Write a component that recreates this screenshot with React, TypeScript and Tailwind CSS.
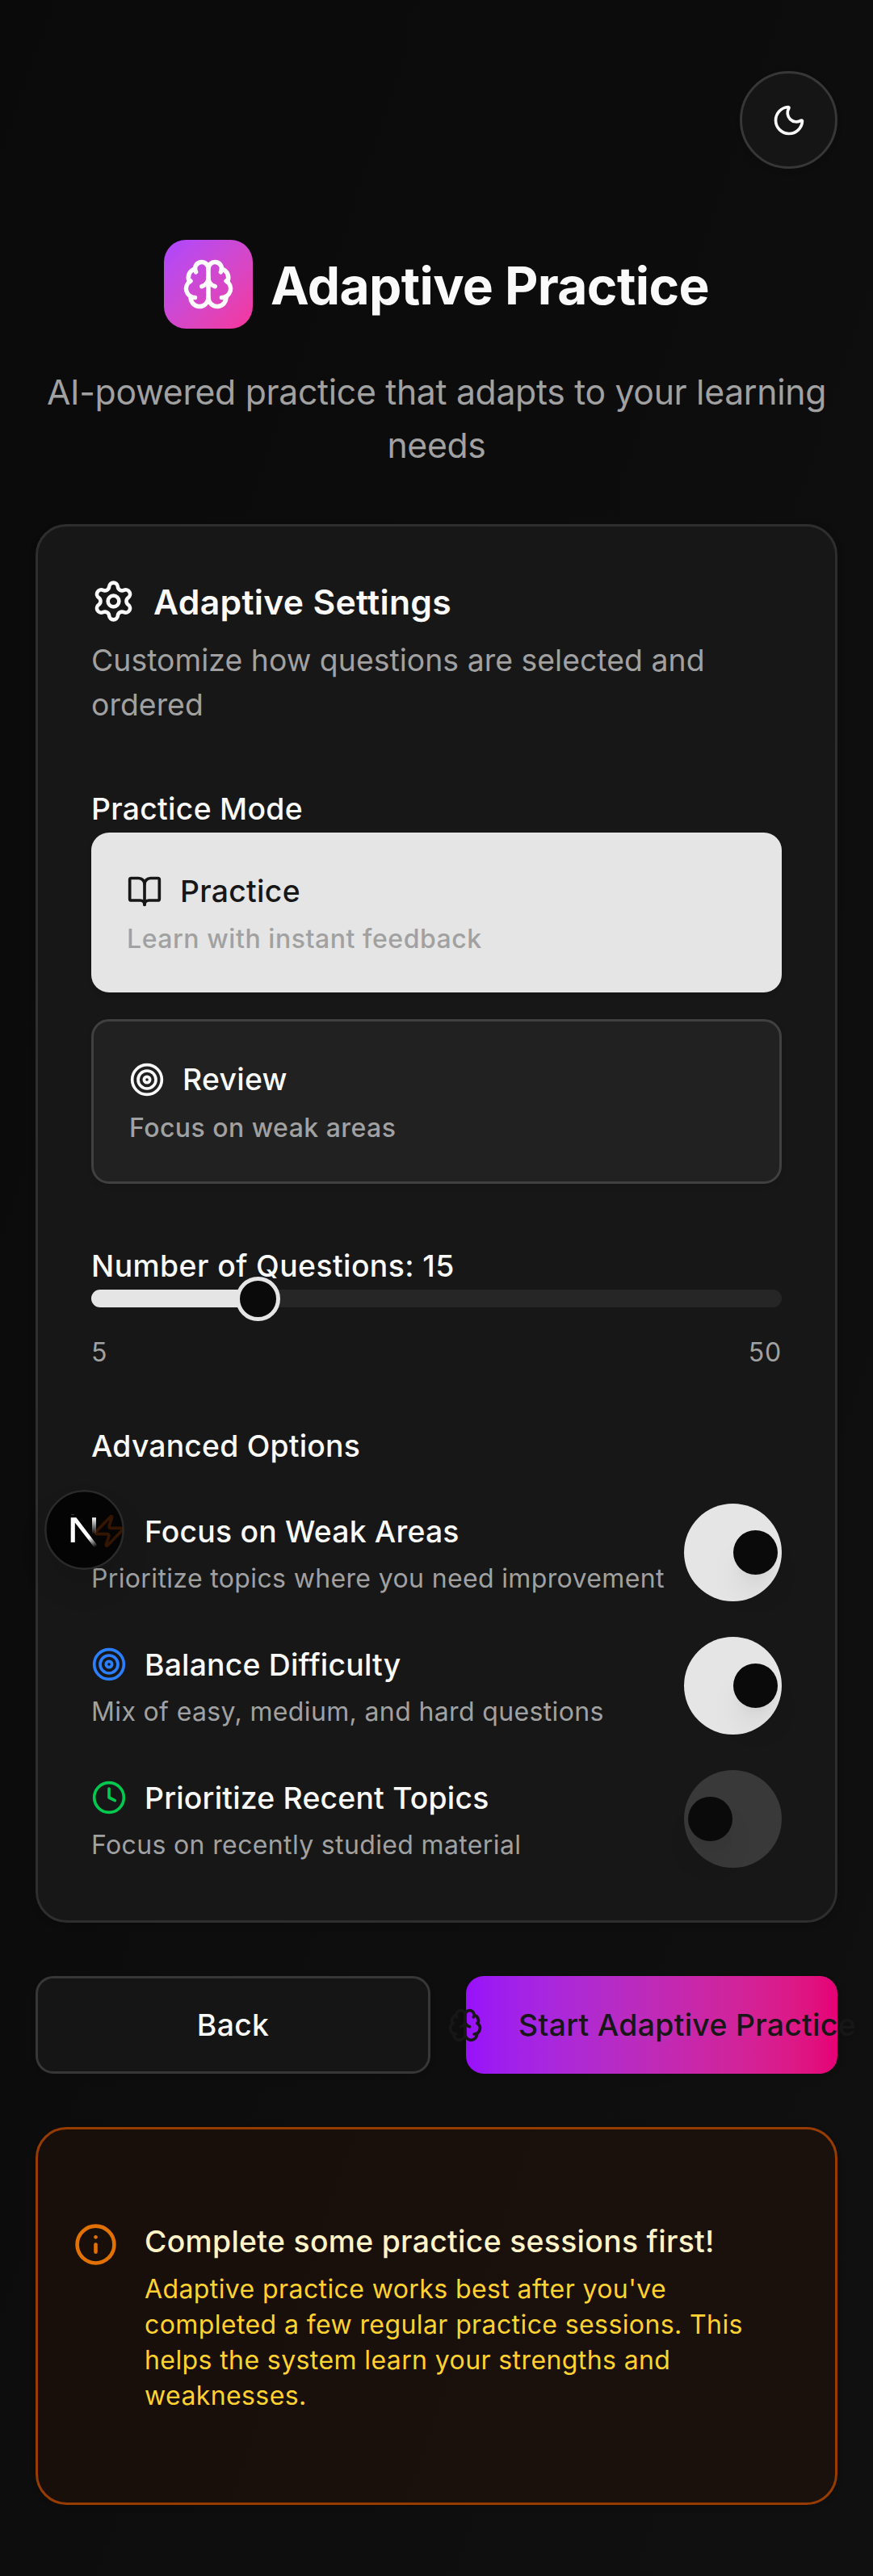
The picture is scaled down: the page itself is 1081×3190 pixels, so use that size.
import React from "react";
import { BookOpen, Brain, Clock, Info, Moon, Settings, Target, Zap } from "lucide-react";

function Switch({ on }: { on: boolean }) {
  return (
    <div
      className={
        on
          ? "flex h-[121px] w-[121px] shrink-0 items-center justify-end rounded-full bg-[#e5e5e5] pr-[5px]"
          : "flex h-[121px] w-[121px] shrink-0 items-center justify-start rounded-full bg-[#393939] pl-[5px]"
      }
    >
      <div className="h-[55px] w-[55px] rounded-full bg-[#0a0a0a] shadow-[0_27px_41px_-8px_rgba(0,0,0,0.1),0_11px_16px_-11px_rgba(0,0,0,0.1)]" />
    </div>
  );
}

function OptionRow({
  icon,
  title,
  text,
  on,
}: {
  icon: React.ReactNode;
  title: string;
  text: string;
  on: boolean;
}) {
  return (
    <div className="flex h-[121px] items-center justify-between">
      <div className="whitespace-nowrap">
        <div className="flex h-[55px] items-center gap-[22px]">
          {icon}
          <span className="text-[37.35px] font-medium leading-[55px] tracking-[0.2px] text-neutral-50">{title}</span>
        </div>
        <p className="mt-[9px] text-[32px] leading-[44px] tracking-[0.36px] text-[#a1a1a1]">{text}</p>
      </div>
      <Switch on={on} />
    </div>
  );
}

function DevBadge() {
  return (
    <div className="absolute left-[55px] top-[1845px] h-[99px] w-[99px] rounded-full bg-black/80 shadow-[0_22px_44px_-6px_rgba(0,0,0,0.12)]">
      <svg viewBox="0 0 99 99" className="h-full w-full" fill="none">
        <defs>
          <linearGradient id="diag" x1="48" y1="50" x2="63" y2="71" gradientUnits="userSpaceOnUse">
            <stop stopColor="#fff" />
            <stop offset="0.45" stopColor="#fff" />
            <stop offset="1" stopColor="#fff" stopOpacity="0" />
          </linearGradient>
          <linearGradient id="stem" x1="61" y1="34" x2="61" y2="55" gradientUnits="userSpaceOnUse">
            <stop stopColor="#fff" />
            <stop offset="1" stopColor="#fff" stopOpacity="0" />
          </linearGradient>
        </defs>
        <circle cx="49.5" cy="49.5" r="48.2" stroke="#2a2a2a" strokeWidth="2.6" />
        <path d="M32.7 34.3H39.4L66 69.3L62.3 72L37.8 40.5V65H32.7Z" fill="url(#diag)" />
        <path d="M59 34.3H64V55H59Z" fill="url(#stem)" />
        <path d="M33 30.7H37" stroke="#3a3a3a" strokeWidth="1" />
      </svg>
    </div>
  );
}

export default function App() {
  return (
    <div className="relative h-[3190px] w-[1081px] overflow-hidden bg-linear-to-br from-[#0a0a0a] to-[#101010] px-[44px] pt-[88px] font-['Inter',sans-serif] text-neutral-50">
      <div className="flex justify-end">
        <button className="flex h-[121px] w-[121px] items-center justify-center rounded-full border-[3px] border-[#373737] bg-[#151515] shadow-[0_3px_6px_rgba(0,0,0,0.1)]">
          <Moon className="h-[44px] w-[44px]" />
        </button>
      </div>

      <header className="mt-[88px]">
        <div className="flex h-[110px] items-center justify-center gap-[22px]">
          <div className="flex h-[110px] w-[110px] items-center justify-center rounded-[27.5px] bg-linear-to-br from-[#ad46ff] to-[#f6339a]">
            <Brain className="h-[66px] w-[66px] text-white" />
          </div>
          <h1 className="pt-[3px] text-[64px] font-bold leading-[88px] tracking-[-0.62px]">Adaptive Practice</h1>
        </div>
        <p className="mt-[46px] text-center text-[42.7px] leading-[66px] tracking-[-0.29px] text-[#a1a1a1]">
          AI-powered practice that adapts to your learning
          <br />
          needs
        </p>
      </header>

      <section className="mt-[64px] h-[1732px] rounded-[38.5px] border-[3px] border-[#2e2e2e] bg-[#171717] px-[66px] pt-[65px] shadow-[0_3px_8px_rgba(0,0,0,0.2)]">
        <div className="flex h-[55px] items-center gap-[22px]">
          <Settings className="h-[55px] w-[55px]" />
          <h2 className="pt-[2px] text-[42.7px] font-semibold leading-[55px] tracking-[0.3px]">Adaptive Settings</h2>
        </div>
        <p className="mt-[18px] text-[37.35px] leading-[55px] tracking-[0.05px] text-[#a1a1a1]">
          Customize how questions are selected and
          <br />
          ordered
        </p>

        <h3 className="mt-[74px] text-[37.35px] font-medium leading-[55px] tracking-[0.29px]">Practice Mode</h3>
        <button className="mt-[2px] flex h-[198px] w-full flex-col rounded-[22px] bg-[#e5e5e5] px-[44px] pt-[45px] text-left text-[#171717] shadow-[0_3px_6px_rgba(0,0,0,0.1)]">
          <span className="flex h-[55px] items-center gap-[22px]">
            <BookOpen className="h-[44px] w-[44px]" />
            <span className="text-[37.35px] font-medium tracking-[0.29px]">Practice</span>
          </span>
          <span className="mt-[10px] text-[32px] font-medium leading-[44px] tracking-[0.55px] text-[#a1a1a1]">
            Learn with instant feedback
          </span>
        </button>
        <button className="mt-[33px] flex h-[204px] w-full flex-col rounded-[22px] border-[3px] border-[#404040] bg-[#212121] px-[44px] pt-[44px] text-left shadow-[0_3px_6px_rgba(0,0,0,0.1)]">
          <span className="flex h-[55px] items-center gap-[22px]">
            <Target className="h-[44px] w-[44px]" />
            <span className="text-[37.35px] font-medium tracking-[0.29px]">Review</span>
          </span>
          <span className="mt-[11px] text-[32px] font-medium leading-[44px] tracking-[0.45px] text-[#a1a1a1]">
            Focus on weak areas
          </span>
        </button>

        <h3 className="mt-[74px] text-[37.35px] font-medium leading-[55px] tracking-[0.42px]">
          Number of Questions: 15
        </h3>
        <div className="relative mt-[2px] h-[22px] rounded-full bg-[#262626]">
          <div className="h-full w-[207px] rounded-l-full bg-[#e5e5e5]" />
          <div className="absolute -top-[16.5px] left-[179px] h-[55px] w-[55px] rounded-full border-[5.5px] border-[#e5e5e5] bg-[#0a0a0a]" />
        </div>
        <div className="mt-[34px] flex justify-between text-[32px] leading-[44px] tracking-[0.8px] text-[#a1a1a1]">
          <span>5</span>
          <span>50</span>
        </div>

        <h3 className="mt-[66px] text-[37.35px] font-medium leading-[55px] tracking-[0.2px]">Advanced Options</h3>
        <div className="mt-[44px] flex flex-col gap-[44px]">
          <OptionRow
            icon={<Zap className="h-[44px] w-[44px] text-[#ff6900]" />}
            title="Focus on Weak Areas"
            text="Prioritize topics where you need improvement"
            on
          />
          <OptionRow
            icon={<Target className="h-[44px] w-[44px] text-[#2b7fff]" />}
            title="Balance Difficulty"
            text="Mix of easy, medium, and hard questions"
            on
          />
          <OptionRow
            icon={<Clock className="h-[44px] w-[44px] text-[#00c950]" />}
            title="Prioritize Recent Topics"
            text="Focus on recently studied material"
            on={false}
          />
        </div>
      </section>

      <div className="mt-[66px] flex h-[121px] gap-[44px] text-[37.35px] font-medium tracking-[0.31px]">
        <button className="flex w-[489px] shrink-0 items-center justify-center rounded-[22px] border-[3px] border-[#373737] bg-[#151515] pt-[2px] shadow-[0_3px_6px_rgba(0,0,0,0.1)]">
          Back
        </button>
        <button className="flex min-w-0 flex-1 items-center justify-center gap-[44px] whitespace-nowrap rounded-[22px] bg-linear-to-r from-[#9810fa] via-[#c727ab] via-60% to-[#e60076] text-[#171717] shadow-[0_3px_6px_rgba(0,0,0,0.1)]">
          <Brain className="h-[44px] w-[44px] shrink-0" />
          <span className="pt-[2px]">Start Adaptive Practice</span>
        </button>
      </div>

      <section className="mt-[66px] flex h-[468px] gap-[33px] rounded-[38.5px] border-[3px] border-[#973c00] bg-[#461901]/20 pl-[44px] pt-[111px] shadow-[0_3px_6px_rgba(0,0,0,0.1)]">
        <Info className="mt-[4px] h-[55px] w-[55px] shrink-0 text-[#e17100]" />
        <div className="whitespace-nowrap">
          <h4 className="text-[37.35px] font-medium leading-[55px] tracking-[0.31px] text-[#fef3c6]">
            Complete some practice sessions first!
          </h4>
          <p className="mt-[10px] text-[32px] leading-[44px] tracking-[0.4px] text-[#ffd230]">
            Adaptive practice works best after you've
            <br />
            completed a few regular practice sessions. This
            <br />
            helps the system learn your strengths and
            <br />
            weaknesses.
          </p>
        </div>
      </section>

      <DevBadge />
    </div>
  );
}
